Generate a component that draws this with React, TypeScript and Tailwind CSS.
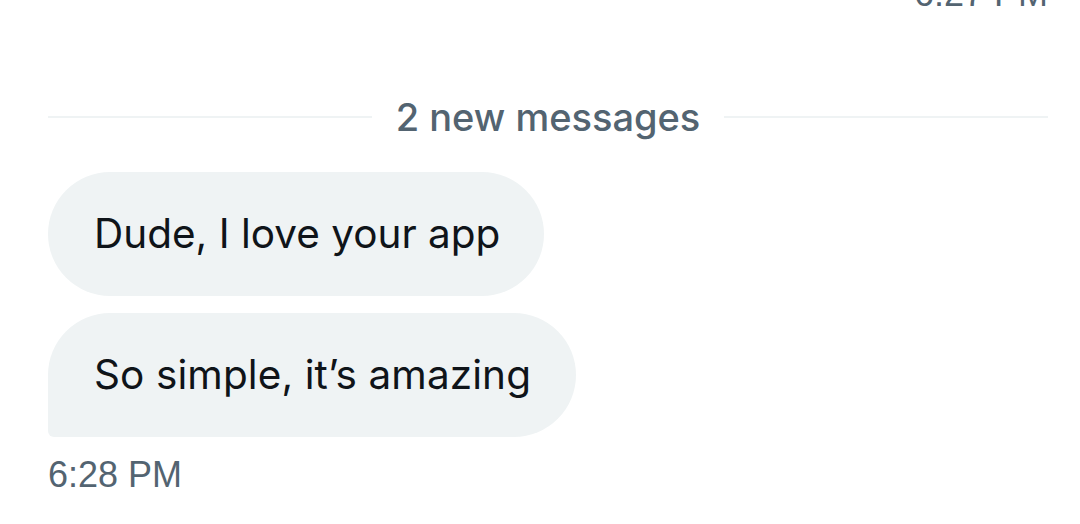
export default function App() {
  return (
    <div className="w-[1080px] h-[524px] overflow-hidden bg-white pl-[48px] pr-[32px] flex flex-col" style={{ fontFamily: "Inter, 'Noto Sans', sans-serif" }}>
      <div className="flex justify-end mt-[-27px] h-[42px] leading-[42px] text-[36px] text-[#536471]" style={{ fontFamily: "'Liberation Sans', Arial, sans-serif" }}>
        6:27 PM
      </div>
      <div className="flex items-center gap-[24px] mt-[79px] h-[46px]">
        <div className="flex-1 h-[2px] bg-[#eff3f4]" />
        <span className="text-[38px] leading-[46px] text-[#536471] font-medium">2 new messages</span>
        <div className="flex-1 h-[2px] bg-[#eff3f4]" />
      </div>
      <div className="flex flex-col items-start mt-[32px] gap-[17px]">
        <div className="bg-[#eff3f4] rounded-[62px] h-[124px] pl-[46px] pr-[44px] flex items-center text-[40.5px] text-[#0f1419]">
          Dude, I love your app
        </div>
        <div className="bg-[#eff3f4] rounded-[62px] rounded-bl-[6px] h-[124px] pl-[46px] pr-[45px] flex items-center text-[40.5px] tracking-[0.1px] text-[#0f1419]">
          So simple, it’s amazing
        </div>
      </div>
      <div className="mt-[14px] text-[36px] leading-[48px] text-[#536471]" style={{ fontFamily: "'Liberation Sans', Arial, sans-serif" }}>
        6:28 PM
      </div>
    </div>
  );
}
